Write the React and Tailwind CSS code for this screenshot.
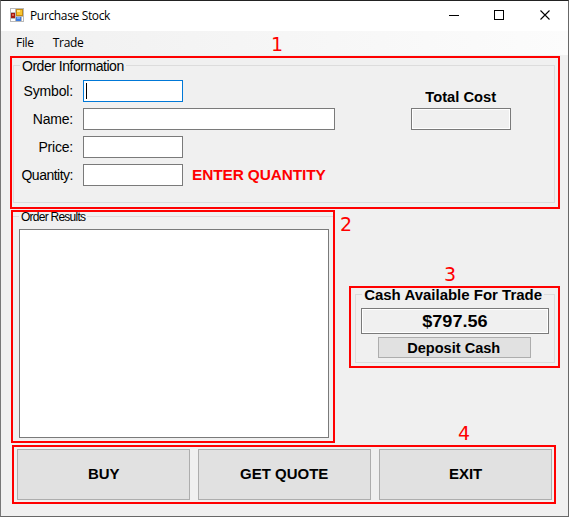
import React from "react";

const ARIAL = "font-['Liberation_Sans',Arial,sans-serif]";
const SEGOE = "font-['Open_Sans','Noto_Sans',sans-serif]";

function AppIcon() {
  return (
    <svg className="mb-[2px]" width="14" height="14" viewBox="0 0 14 14" shapeRendering="crispEdges">
      <rect width="14" height="14" fill="#b9b9b9" />
      <rect x="1" y="1" width="4" height="3" fill="#fff" />
      <rect x="1" y="11" width="4" height="2" fill="#fff" />
      <rect x="12" y="9" width="1" height="4" fill="#fff" />
      <rect x="6" y="1" width="7" height="7" fill="#c58b12" />
      <rect x="7" y="2" width="5" height="5" fill="#f9c52f" />
      <rect x="7" y="2" width="3" height="2" fill="#ffe48a" />
      <rect x="1" y="5" width="4" height="5" fill="#a31b12" />
      <rect x="2" y="6" width="2" height="2" fill="#e0614f" />
      <rect x="6" y="9" width="5" height="4" fill="#3d7be0" />
      <rect x="7" y="9" width="3" height="2" fill="#79aaf5" />
    </svg>
  );
}

function TitleBar() {
  return (
    <header className="flex h-[30px] shrink-0 items-center bg-white pl-[9px]">
      <AppIcon />
      <span className={`${SEGOE} ml-[6px] text-[12px] leading-[16px] tracking-[-0.35px]`}>Purchase Stock</span>
      <svg className="mb-[2px] ml-auto mr-[17px]" width="102" height="12" viewBox="0 0 102 12" fill="none" stroke="#000" shapeRendering="crispEdges">
        <path d="M0 6.5h10" />
        <rect x="45.5" y="1.5" width="9" height="9" />
        <path d="M91.5 1.5l9 9M100.5 1.5l-9 9" shapeRendering="auto" strokeWidth="1.1" />
      </svg>
    </header>
  );
}

function Field({ label, tracking, wide, focused, note }) {
  return (
    <div className="flex h-[22px] items-center">
      <span className={`w-[59px] whitespace-nowrap text-right text-[14px] leading-[16px] ${tracking}`}>{label}</span>
      <div className={`ml-[10px] flex h-[22px] items-center border bg-white pl-[2px] ${wide ? "w-[252px]" : "w-[100px]"} ${focused ? "border-[#0078d7]" : "border-[#7a7a7a]"}`}>
        {focused && <div className="h-[16px] w-px bg-black" />}
      </div>
      {note && <span className="ml-[9px] origin-left scale-x-[1.1] whitespace-nowrap text-[14px] font-bold leading-[16px] tracking-[-0.1px] text-[#ff0000]">{note}</span>}
    </div>
  );
}

function Marker({ n, place }) {
  return <span className={`absolute origin-left scale-x-[0.95] font-['DejaVu_Sans',sans-serif] text-[20px] leading-[22px] text-[#ff0000] ${place}`}>{n}</span>;
}

function BigButton({ children }) {
  return (
    <button className="h-[51px] w-[173px] border border-[#adadad] bg-[#e1e1e1] pb-[2px] text-[14px] font-bold leading-[16px]">
      <span className="inline-block scale-x-[1.07]">{children}</span>
    </button>
  );
}

export default function App() {
  return (
    <div className={`${ARIAL} relative flex h-[517px] w-[569px] flex-col overflow-hidden border border-t-[#222] border-b-[#686868] border-l-[#777] border-r-[#686868] bg-[#f0f0f0] text-black`}>
      <TitleBar />
      <nav className={`${SEGOE} flex h-[24px] shrink-0 items-center gap-[19px] bg-linear-to-r from-[#f0f0f0] to-[#fcfcfc] pl-[15px] text-[12px] leading-[16px] tracking-[-0.3px]`}>
        <span>File</span>
        <span>Trade</span>
      </nav>

      <section className="ml-[9px] mt-px h-[153px] w-[550px] shrink-0 border-2 border-[#ff0000] pl-px pt-[7px]">
        <div className="relative flex h-[138px] w-[542px] justify-between border border-[#dcdcdc] pr-[43px]">
          <span className="absolute left-[6px] top-[-7px] whitespace-nowrap bg-[#f0f0f0] px-[2px] text-[14px] leading-[14px] tracking-[-0.47px]">Order Information</span>
          <div className="flex flex-col gap-[6px] pt-[14px]">
            <Field label="Symbol:" tracking="tracking-[-0.15px]" focused />
            <Field label="Name:" tracking="tracking-[-0.2px]" wide />
            <Field label="Price:" tracking="tracking-[-0.2px]" />
            <Field label="Quantity:" tracking="tracking-[-0.5px]" note="ENTER QUANTITY" />
          </div>
          <div className="flex w-[100px] flex-col items-center pt-[23px]">
            <span className="scale-x-[1.05] text-[14px] font-bold leading-[16px]">Total Cost</span>
            <div className="mt-[3px] h-[22px] w-full border border-[#7a7a7a] bg-[#f0f0f0] shadow-[inset_0_0_0_1px_#fff]" />
          </div>
        </div>
      </section>

      <div className="mt-px flex shrink-0 pl-[10px]">
        <section className="h-[233px] w-[324px] border-2 border-[#ff0000]">
          <div className="relative mt-[4px] h-[224px] border-t border-[#dcdcdc] pl-[6px] pt-[12px]">
            <span className="absolute left-[6px] top-[-5px] whitespace-nowrap bg-[#f0f0f0] px-[2px] text-[12px] leading-[10px] tracking-[-0.75px]">Order Results</span>
            <div className="h-[209px] w-[310px] border border-[#7a7a7a] bg-white" />
          </div>
        </section>
        <section className="ml-[14px] mt-[76px] h-[82px] w-[211px] border-2 border-[#ff0000] pl-[4px] pt-[6px]">
          <div className="relative flex h-[69px] w-[200px] flex-col items-center border border-[#dcdcdc] pt-[13px]">
            <span className="absolute left-[6px] top-[-6px] origin-left scale-x-[1.07] whitespace-nowrap bg-[#f0f0f0] px-[2px] text-[14px] font-bold leading-[13px]">Cash Available For Trade</span>
            <div className="flex h-[26px] w-[188px] items-center justify-center border border-[#7a7a7a] pt-px text-[16px] font-bold leading-[18px] shadow-[inset_0_0_0_1px_#fff]">
              <span className="scale-x-[1.13]">$797.56</span>
            </div>
            <button className="mr-[2px] mt-[3px] h-[21px] w-[153px] border border-[#adadad] bg-[#e1e1e1] text-[14px] font-bold leading-[16px]">
              <span className="inline-block scale-x-[1.04]">Deposit Cash</span>
            </button>
          </div>
        </section>
      </div>

      <section className="ml-[11px] mt-[2px] flex h-[59px] w-[544px] shrink-0 gap-[8px] border-2 border-[#ff0000] pl-[3px] pt-[2px]">
        <BigButton>BUY</BigButton>
        <BigButton>GET QUOTE</BigButton>
        <BigButton>EXIT</BigButton>
      </section>

      <Marker n="1" place="left-[270px] top-[32px]" />
      <Marker n="2" place="left-[339px] top-[212px]" />
      <Marker n="3" place="left-[443px] top-[262px]" />
      <Marker n="4" place="left-[457px] top-[421px]" />
    </div>
  );
}
